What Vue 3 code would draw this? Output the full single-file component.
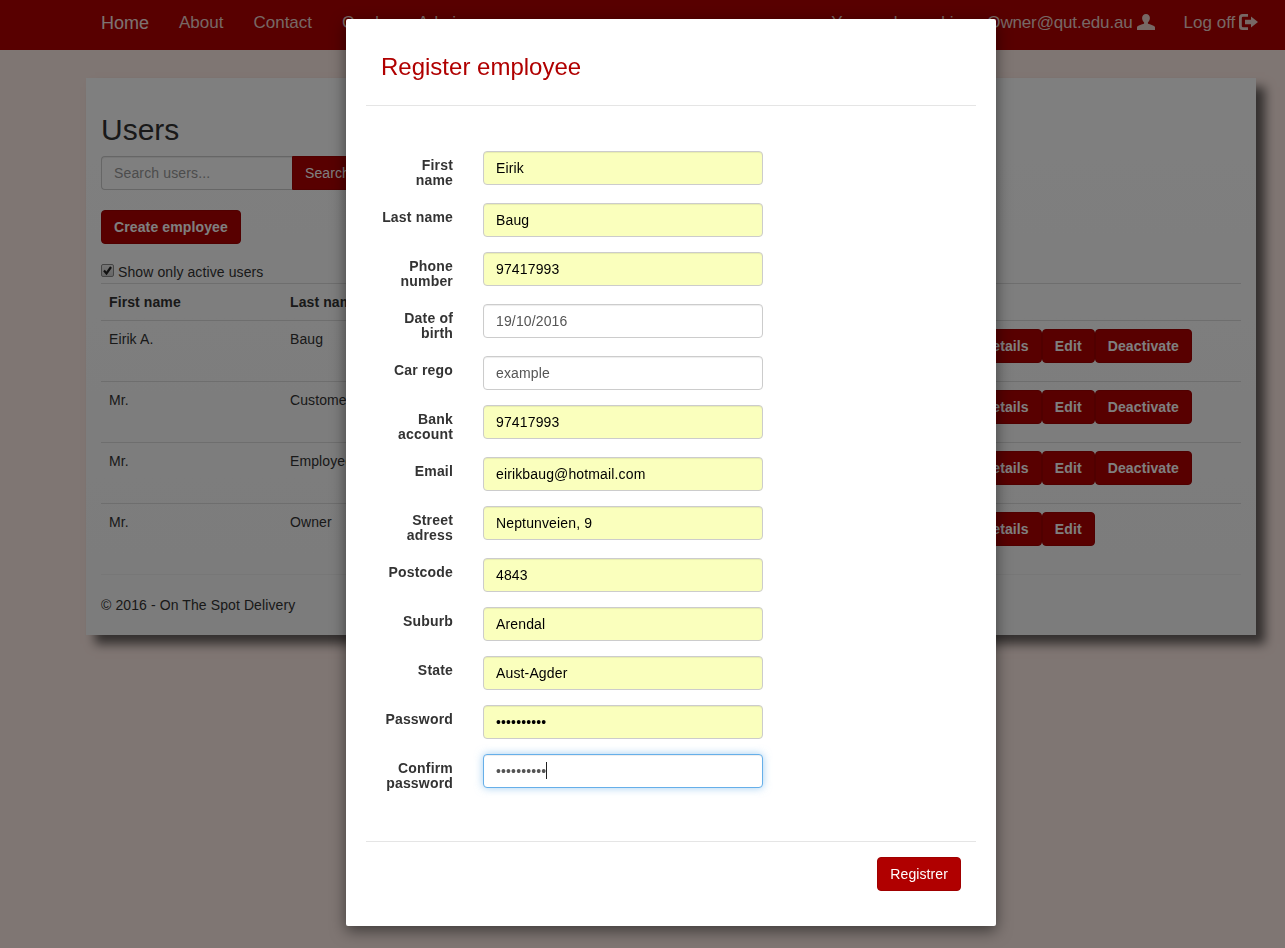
<template>
  <div class="page">
    <nav class="navbar">
      <a class="brand">Home</a>
      <a v-for="link in navLinks" :key="link" class="nav-link">{{ link }}</a>
      <div class="nav-right">
        <a class="nav-link">
          You are logged in: <span class="nav-email">Owner@qut.edu.au</span>
          <svg class="icon-user" viewBox="0 0 18 16">
            <path d="M9 0c2.500 0 3.900 1.700 3.900 4.100 0 1.800-.8 3.400-2 4.300v1.200c0 .6 6.300 1.500 7.100 3.600V16H0v-2.800c.8-2.100 7.100-3 7.100-3.600V8.400c-1.200-.9-2-2.500-2-4.300C5.100 1.700 6.500 0 9 0z" />
          </svg>
        </a>
        <a class="nav-link logoff">
          Log off
          <svg class="icon-logout" viewBox="0 0 19 16">
            <path d="M7 0H3.500A3.500 3.500 0 0 0 0 3.500v9A3.500 3.500 0 0 0 3.500 16H9v-2.800H4a1.200 1.200 0 0 1-1.200-1.200V4A1.200 1.200 0 0 1 4 2.800h5V0z" />
            <path d="M12 2.500 19 8l-7 5.500V10.300H6V5.700h6z" />
          </svg>
        </a>
      </div>
    </nav>

    <main class="card">
      <h2>Users</h2>
      <div class="search">
        <input class="control search-input" placeholder="Search users..." />
        <button class="btn search-btn">Search</button>
      </div>
      <button class="btn btn-bold create-btn">Create employee</button>
      <label class="active-only">
        <span class="check">
          <svg viewBox="0 0 13 13"><path d="M3 6.500 5.500 9.500 10 3" /></svg>
        </span>
        Show only active users
      </label>
      <table class="users">
        <colgroup>
          <col class="col-name" />
          <col class="col-name" />
          <col />
          <col class="col-actions" />
        </colgroup>
        <thead>
          <tr>
            <th>First name</th>
            <th>Last name</th>
            <th></th>
            <th></th>
          </tr>
        </thead>
        <tbody>
          <tr v-for="user in users" :key="user.last">
            <td>{{ user.first }}</td>
            <td>{{ user.last }}</td>
            <td></td>
            <td>
              <div class="actions">
                <button class="btn btn-bold">Details</button>
                <button class="btn btn-bold">Edit</button>
                <button v-if="user.active" class="btn btn-bold">Deactivate</button>
              </div>
            </td>
          </tr>
        </tbody>
      </table>
      <hr />
      <footer>© 2016 - On The Spot Delivery</footer>
    </main>

    <div class="backdrop"></div>

    <section class="modal">
      <header class="modal-header">
        <h4>Register employee</h4>
      </header>
      <form class="modal-body">
        <div v-for="field in fields" :key="field.label" class="form-row">
          <label>{{ field.label }}</label>
          <div class="field">
            <input
              class="control"
              :class="{ filled: field.filled, focused: field.focused }"
              :type="field.type || 'text'"
              :value="field.value"
              readonly
            />
            <span v-if="field.focused" class="caret"></span>
          </div>
        </div>
      </form>
      <footer class="modal-footer">
        <button class="btn">Registrer</button>
      </footer>
    </section>
  </div>
</template>

<script setup>
const navLinks = ["About", "Contact", "Cards", "Admin"];

const users = [
  { first: "Eirik A.", last: "Baug", active: true },
  { first: "Mr.", last: "Customer", active: true },
  { first: "Mr.", last: "Employee", active: true },
  { first: "Mr.", last: "Owner", active: false },
];

const fields = [
  { label: "First name", value: "Eirik", filled: true },
  { label: "Last name", value: "Baug", filled: true },
  { label: "Phone number", value: "97417993", filled: true },
  { label: "Date of birth", value: "19/10/2016" },
  { label: "Car rego", value: "example" },
  { label: "Bank account", value: "97417993", filled: true },
  { label: "Email", value: "eirikbaug@hotmail.com", filled: true },
  { label: "Street adress", value: "Neptunveien, 9", filled: true },
  { label: "Postcode", value: "4843", filled: true },
  { label: "Suburb", value: "Arendal", filled: true },
  { label: "State", value: "Aust-Agder", filled: true },
  { label: "Password", value: "eirikbaug1", type: "password", filled: true },
  { label: "Confirm password", value: "eirikbaug1", type: "password", focused: true },
];
</script>

<style>
html,
body {
  margin: 0;
  background: #ffece6;
}
</style>

<style scoped>
.page {
  height: 948px;
  overflow: hidden;
  font-family: "Liberation Sans", Arial, sans-serif;
  font-size: 14px;
  line-height: 20px;
  letter-spacing: 0.1px;
  color: #333;
}

.navbar {
  display: flex;
  height: 50px;
  padding: 0 12px 0 86px;
  box-sizing: border-box;
  background: #b00000;
  color: #eed0ca;
  letter-spacing: 0;
}
.brand,
.nav-link {
  padding: 12px 15px 0;
  line-height: 22px;
  font-size: 17px;
  white-space: nowrap;
}
.brand {
  font-size: 18px;
  color: #fbe6e2;
}
.nav-right {
  display: flex;
  margin-left: auto;
}
.nav-email {
  margin-left: 15px;
  letter-spacing: -0.15px;
}
.logoff {
  padding-left: 14px;
}
.icon-user,
.icon-logout {
  width: 18px;
  height: 16px;
  margin-left: 4px;
  vertical-align: -2px;
  fill: currentColor;
}
.icon-logout {
  width: 19px;
  margin-left: -1px;
}

.card {
  width: 1170px;
  height: 557px;
  box-sizing: border-box;
  margin: 28px 0 0 86px;
  padding: 35px 15px 0;
  background: linear-gradient(#fff, #f8f8f8);
  box-shadow: 9px 9px 10px rgba(0, 0, 0, 0.6);
}
h2 {
  margin: 0 0 10px;
  font-size: 30px;
  font-weight: 400;
  line-height: 33px;
  letter-spacing: 0;
}

.control {
  display: block;
  width: 280px;
  height: 34px;
  box-sizing: border-box;
  padding: 6px 12px;
  border: 1px solid #ccc;
  border-radius: 4px;
  outline: none;
  background: #fff;
  box-shadow: inset 0 1px 1px rgba(0, 0, 0, 0.075);
  font: 14px/20px "Liberation Sans", Arial, sans-serif;
  letter-spacing: 0.14px;
  color: #555;
}
.control::placeholder {
  color: #999;
}
.control.filled {
  background: #faffbd;
  color: #000;
}
.control.focused {
  border-color: #66afe9;
  box-shadow: inset 0 1px 1px rgba(0, 0, 0, 0.075), 0 0 8px rgba(102, 175, 233, 0.6);
}

.btn {
  height: 34px;
  box-sizing: border-box;
  padding: 6px 12px;
  border: 1px solid #a00000;
  border-radius: 4px;
  background: #b00000;
  font: 14px/20px "Liberation Sans", Arial, sans-serif;
  letter-spacing: 0.1px;
  color: #fff;
}
.btn-bold {
  font-weight: 700;
  letter-spacing: 0.12px;
}

.search {
  display: flex;
}
.search-input {
  width: 191px;
  border-right: 0;
  border-radius: 4px 0 0 4px;
}
.search-btn {
  border-radius: 0 4px 4px 0;
}
.create-btn {
  display: block;
  margin-top: 20px;
}

.active-only {
  display: flex;
  align-items: center;
  gap: 4px;
  margin-top: 18px;
}
.check {
  width: 13px;
  height: 13px;
  box-sizing: border-box;
  margin-top: -3px;
  border: 1px solid #8a8a8a;
  border-radius: 2px;
  background: linear-gradient(#eee, #ccc);
}
.check svg {
  display: block;
  width: 13px;
  height: 13px;
  margin: -1px;
  fill: none;
  stroke: #222;
  stroke-width: 2.2;
}

.users {
  width: 1140px;
  margin-top: 1px;
  border-collapse: collapse;
  table-layout: fixed;
}
.col-name {
  width: 181px;
}
.col-actions {
  width: 280px;
}
.users th,
.users td {
  padding: 8px;
  border-top: 1px solid #ddd;
  text-align: left;
  vertical-align: top;
}
.users th {
  border-bottom: 1px solid #ddd;
}
.users td {
  height: 61px;
  box-sizing: border-box;
  padding-bottom: 18px;
}
.users tbody tr:first-child td {
  border-top: 0;
}
.actions {
  display: flex;
}

hr {
  margin: 9px 0 20px;
  border: 0;
  border-top: 1px solid #eee;
}

.backdrop {
  position: fixed;
  inset: 0;
  background: rgba(0, 0, 0, 0.5);
}

.modal {
  position: absolute;
  top: 19px;
  left: 346px;
  width: 650px;
  height: 907px;
  box-sizing: border-box;
  padding: 20px;
  border-radius: 2px;
  background: #fff;
  box-shadow: 0 5px 15px rgba(0, 0, 0, 0.5);
}
.modal-header {
  padding: 15px 15px 25px;
  border-bottom: 1px solid #e5e5e5;
}
h4 {
  margin: 0;
  font-size: 24px;
  font-weight: 400;
  line-height: 26px;
  letter-spacing: 0;
  color: #b00000;
}
.modal-body {
  padding: 45px 0 35px;
}
.form-row {
  display: flex;
  margin-bottom: 15px;
}
.form-row label {
  box-sizing: border-box;
  width: 102px;
  padding: 7px 15px 0;
  font-weight: 700;
  line-height: 15px;
  letter-spacing: 0.18px;
  text-align: right;
}
.field {
  position: relative;
  margin-left: 15px;
}
.caret {
  position: absolute;
  top: 8px;
  left: 63px;
  width: 1px;
  height: 17px;
  background: #222;
}
.modal-footer {
  display: flex;
  justify-content: flex-end;
  padding: 15px;
  border-top: 1px solid #e5e5e5;
}
</style>
